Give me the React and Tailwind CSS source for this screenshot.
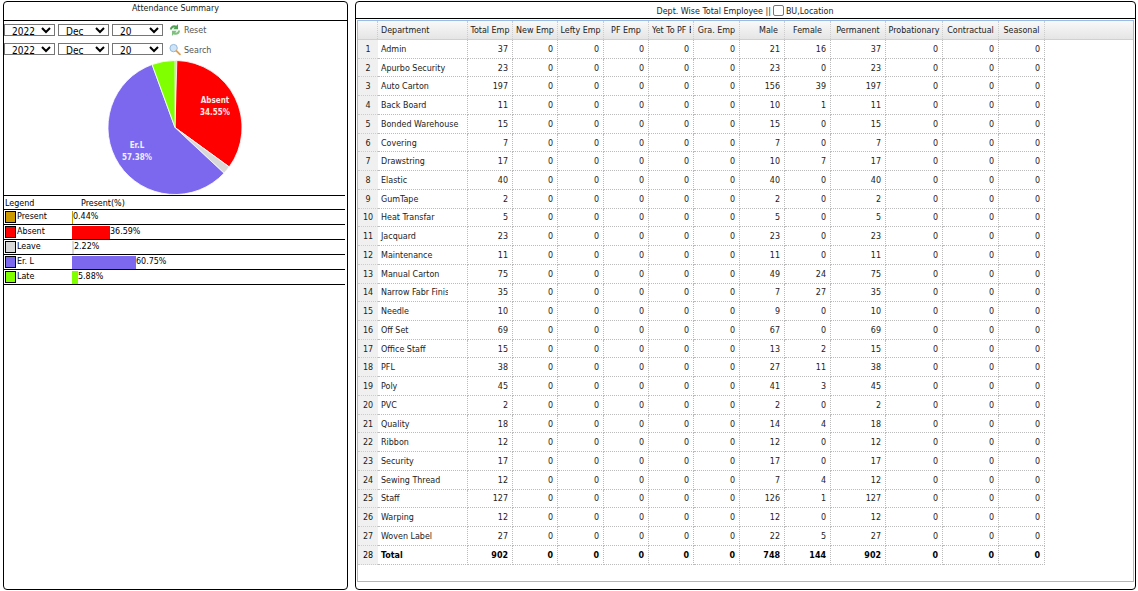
import React from "react";

const cols = [
  ["Total Emp", 45], ["New Emp", 45], ["Lefty Emp", 46], ["PF Emp", 45], ["Yet To PF Emp", 45], ["Gra. Emp", 46],
  ["Male", 45], ["Female", 46], ["Permanent", 55], ["Probationary", 57], ["Contractual", 56], ["Seasonal", 46],
];
const rows = [
  ["Admin",37,21,16,37],["Apurbo Security",23,23,0,23],["Auto Carton",197,156,39,197],["Back Board",11,10,1,11],
  ["Bonded Warehouse",15,15,0,15],["Covering",7,7,0,7],["Drawstring",17,10,7,17],["Elastic",40,40,0,40],
  ["GumTape",2,2,0,2],["Heat Transfar",5,5,0,5],["Jacquard",23,23,0,23],["Maintenance",11,11,0,11],
  ["Manual Carton",75,49,24,75],["Narrow Fabr Finishing",35,7,27,35],["Needle",10,9,0,10],["Off Set",69,67,0,69],
  ["Office Staff",15,13,2,15],["PFL",38,27,11,38],["Poly",45,41,3,45],["PVC",2,2,0,2],["Quality",18,14,4,18],
  ["Ribbon",12,12,0,12],["Security",17,17,0,17],["Sewing Thread",12,7,4,12],["Staff",127,126,1,127],
  ["Warping",12,12,0,12],["Woven Label",27,22,5,27],["Total",902,748,144,902],
];
const legend = [
  ["Present", "#cc9900", 1, "0.44%"], ["Absent", "#ff0000", 38, "36.59%"], ["Leave", "#d9d9d9", 2, "2.22%"],
  ["Er. L", "#7b68ee", 64, "60.75%"], ["Late", "#7fff00", 6, "5.88%"],
];

function slice(a, b, r = 67, cx = 68, cy = 67.500) {
  const p = (d) => {
    const t = (d * Math.PI) / 180;
    return `${cx + r * Math.sin(t)} ${cy - r * Math.cos(t)}`;
  };
  return `M${cx} ${cy}L${p(a)}A${r} ${r} 0 ${b - a > 180 ? 1 : 0} 1 ${p(b)}Z`;
}

function Pie() {
  const parts = [[0, 1.6, "#cc9900"], [1.6, 126, "#ff0000"], [126, 133, "#d9d9d9"], [133, 340, "#7b68ee"], [340, 360, "#7fff00"]];
  return (
    <svg width="136" height="135" viewBox="0 0 136 135" className="block">
      {parts.map(([a, b, c]) => <path key={a} d={slice(a, b)} fill={c} stroke="#fff" strokeWidth="0.8" />)}
      <g fill="#fff" fontSize="8" textAnchor="middle" fontWeight="700" opacity="0.9" style={{ fontStretch: "condensed" }}>
        <text x="108" y="43">Absent</text>
        <text x="108" y="55">34.55%</text>
        <text x="30" y="88">Er.L</text>
        <text x="30" y="100">57.38%</text>
      </g>
    </svg>
  );
}

function Sel({ v }) {
  return (
    <select defaultValue={v} className="w-[51px] h-[12px] border border-[#767676] bg-white text-[10px] leading-[10px] text-black pl-[3px]">
      <option>{v}</option>
    </select>
  );
}

function DateRow({ icon, label, shift }) {
  return (
    <div className="flex items-center h-[12px]">
      <div className="flex gap-[3px]">
        <Sel v="2022" />
        <Sel v="Dec" />
        <Sel v="20" />
      </div>
      <span className="ml-[6px] w-[12px] h-[14px] flex items-center">{icon}</span>
      <span className={`ml-[3px] text-[#555] ${shift}`}>{label}</span>
    </div>
  );
}

const ResetIcon = (
  <svg width="13" height="14" viewBox="0 0 13 14">
    <path d="M1 6.500C1 2.800 5 .8 8 2.400L9.800 .6v5.600H4.500L6.300 4.400C4.800 3.700 3.400 4.700 3.300 6.500Z" fill="#4f9f55" />
    <path d="M12 7.500C12 11.200 8 13.200 5 11.600L3.200 13.400V7.800h5.300L6.700 9.600C8.200 10.300 9.600 9.300 9.700 7.500Z" fill="#7fc07f" />
  </svg>
);
const SearchIcon = (
  <svg width="13" height="13" viewBox="0 0 13 13">
    <circle cx="5" cy="5" r="4" fill="#cfe4f7" stroke="#8db4d8" />
    <path d="M8 8l3.800 3.800" stroke="#dba25a" strokeWidth="2" strokeLinecap="round" />
  </svg>
);

export default function App() {
  return (
    <div className="w-[1138px] h-[591px] bg-white flex text-[8.9px] leading-[12px] text-[#222] overflow-hidden [font-stretch:condensed]" style={{ fontFamily: "'DejaVu Sans', Tahoma, sans-serif" }}>
      <section className="ml-[3px] mt-[1px] w-[345px] h-[589px] border border-black rounded-[4px] flex flex-col">
        <h2 className="h-[19px] border-b border-black text-center font-normal shrink-0">Attendance Summary</h2>
        <div className="pt-[3px] flex flex-col gap-[7px]">
          <DateRow icon={ResetIcon} label="Reset" shift="" />
          <DateRow icon={SearchIcon} label="Search" shift="pt-[2px]" />
        </div>
        <div className="flex justify-center mt-[5px] pr-[1px] h-[135px]"><Pie /></div>
        <div className="w-[341px] border-t border-black">
          <div className="h-[14px] flex items-center border-b border-black text-black">
            <span className="w-[77px] pl-[1px]">Legend</span>
            <span>Present(%)</span>
          </div>
          {legend.map(([n, c, w, p]) => (
            <div key={n} className="h-[15px] flex items-center border-b border-black text-black">
              <span className="ml-[1px] w-[11px] h-[12px] border border-black" style={{ background: c }} />
              <span className="w-[56px] pl-[1px] pb-[2px]">{n}</span>
              <span className="h-[13px]" style={{ width: w, background: c }} />
              <span className="pb-[2px]">{p}</span>
            </div>
          ))}
        </div>
      </section>
      <section className="ml-[7px] mt-[1px] w-[781px] h-[589px] border border-black rounded-[4px] flex flex-col">
        <h2 className="h-[17px] shrink-0 border-b border-black font-normal flex items-center justify-center pr-[1px] pt-[2px]">
          <span>Dept. Wise Total Employee ||</span>
          <span className="inline-block w-[11px] h-[11px] border border-[#767676] rounded-[2px] mx-[2px] -mt-[2px]" />
          <span>BU,Location</span>
        </h2>
        <div className="ml-[1px] mt-[1px] w-[777px] h-[562px] border border-[#99bbe8] overflow-hidden">
          <div className="flex h-[19px] bg-gradient-to-b from-[#f9f9f9] to-[#e5e5e5] border-b border-[#d0d0d0]">
            <div className="w-[20px] border-r border-dotted border-[#ccc] shrink-0" />
            <div className="w-[90px] pl-[3px] flex items-center border-r border-dotted border-[#ccc] shrink-0">Department</div>
            {cols.map(([n, w]) => (
              <div key={n} style={{ width: w }} className={`shrink-0 flex items-center border-r border-dotted border-[#ccc] overflow-hidden whitespace-nowrap ${n === "Male" ? "justify-end pr-[6px]" : "justify-center"}`}>
                {n === "Yet To PF Emp" ? <span className="self-stretch flex items-center w-[39px] min-w-[39px] ml-[1px] overflow-hidden">{n}</span> : n}
              </div>
            ))}
            <div className="flex-1" />
          </div>
          {rows.map((r, i) => {
            const last = i === rows.length - 1;
            const vals = [r[1], 0, 0, 0, 0, 0, r[2], r[3], r[4], 0, 0, 0];
            return (
              <div key={r[0]} className={`flex h-[18.74px] ${last ? "font-bold text-black" : ""}`}>
                <div className="w-[20px] shrink-0 bg-[#f0f0f0] flex items-center justify-center font-normal border-b border-dotted border-[#ccc]">{i + 1}</div>
                <div className="w-[90px] shrink-0 pl-[3px] flex items-center overflow-hidden whitespace-nowrap border-r border-b border-dotted border-[#bbb]">
                  {r[0].startsWith("Narrow") ? <span className="block w-[67px] min-w-[67px] overflow-hidden">{r[0]}</span> : r[0]}
                </div>
                {vals.map((v, j) => (
                  <div key={j} style={{ width: cols[j][1] }} className="shrink-0 flex items-center justify-end pr-[4px] border-r border-b border-dotted border-[#bbb]">{v}</div>
                ))}
              </div>
            );
          })}
        </div>
      </section>
    </div>
  );
}
